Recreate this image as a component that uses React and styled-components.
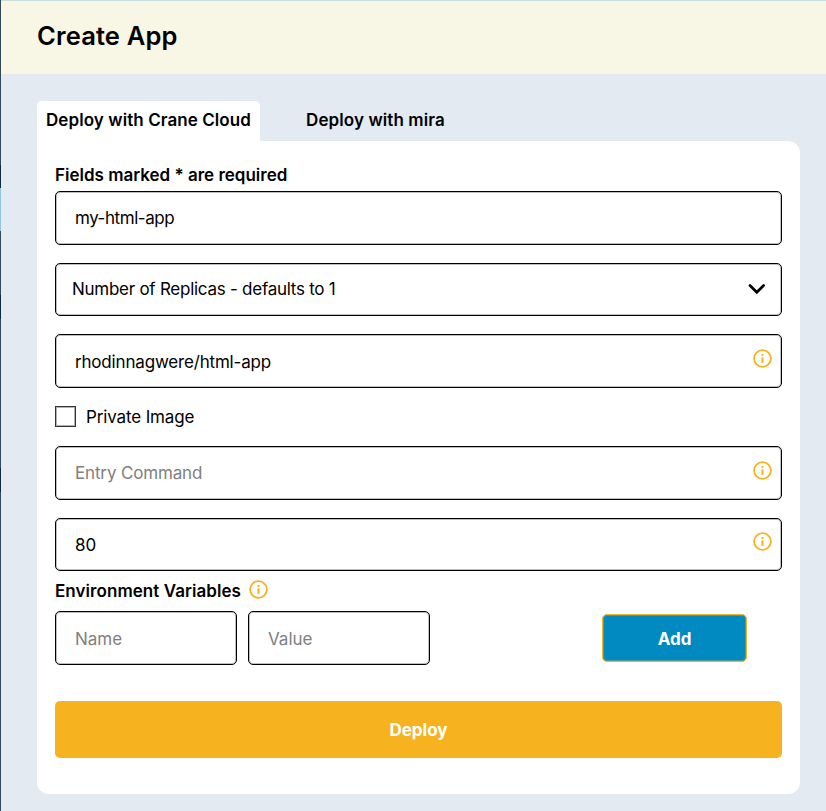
import React from "react";
import styled, { createGlobalStyle } from "styled-components";

const GlobalStyle = createGlobalStyle`
  *, *::before, *::after { box-sizing: border-box; }
  body { margin: 0; background: #e4eaf2; }
  input, button { font: inherit; color: inherit; }
`;

const Page = styled.div`
  display: flex;
  height: 811px;
  font-family: Inter, "Open Sans", sans-serif;
  font-size: 17px;
  line-height: 20px;
  color: #000;
`;

const SidebarEdge = styled.div`
  flex: 0 0 1px;
  background: linear-gradient(
    #34495c 165px, #0d2b40 165px 188px, #8fc6de 188px 231px,
    #34495c 231px 295px, #0d2b40 295px 319px, #34495c 319px 468px,
    #0d2b40 468px 492px, #34495c 492px
  );
`;

const Main = styled.main`
  flex: 1;
  display: flex;
  flex-direction: column;
  background: #e4eaf2;
`;

const Header = styled.header`
  height: 73.5px;
  padding: 20px 0 0 36px;
  border-top: 1px solid #c8dfe0;
  background: #f8f6e4;
`;

const Title = styled.h1`
  margin: 0;
  font-size: 25.5px;
  font-weight: 600;
  line-height: 30px;
  letter-spacing: 0.16px;
`;

const Content = styled.div`
  padding: 27px 26px 0 36px;
`;

const Tabs = styled.nav`
  display: flex;
  gap: 37px;
`;

const Tab = styled.button`
  height: 40px;
  padding: 0 9px 2px;
  border: 0;
  border-radius: 5px 5px 0 0;
  background: ${(p) => (p.$active ? "#fff" : "transparent")};
  font-weight: 600;
  letter-spacing: ${(p) => p.$tracking}px;
  white-space: nowrap;
  width: ${(p) => (p.$active ? "223px" : "auto")};
`;

const Card = styled.form`
  display: flex;
  flex-direction: column;
  height: 653.5px;
  padding: 24px 18px 0;
  border-radius: 0 12px 12px 12px;
  background: #fff;
`;

const Label = styled.div`
  display: flex;
  gap: 8px;
  height: 20px;
  margin-top: ${(p) => p.$top ?? 0}px;
  margin-bottom: ${(p) => p.$gap}px;
  font-weight: 600;
  letter-spacing: ${(p) => p.$tracking ?? 0}px;
`;

const Field = styled.div`
  display: flex;
  align-items: center;
  flex: 0 0 auto;
  width: ${(p) => p.$width ?? "100%"};
  height: ${(p) => p.$height ?? 54}px;
  padding: 0 ${(p) => p.$right ?? 9}px 0 ${(p) => p.$left ?? 19}px;
  border: 1px solid #000;
  border-radius: 5px;
  box-shadow: inset 0 0 0 1px rgba(0, 0, 0, 0.25);
`;

const Input = styled.input`
  flex: 1;
  min-width: 0;
  height: 26px;
  padding: ${(p) => (p.$low ? "2px 0 0" : "0")};
  border: 0;
  outline: 0;
  background: transparent;
  letter-spacing: ${(p) => p.$tracking ?? 0}px;
  &::placeholder { color: #808080; opacity: 1; }
`;

const SelectText = styled.span`
  flex: 1;
  letter-spacing: -0.26px;
`;

const Stack = styled.div`
  display: flex;
  flex-direction: column;
  gap: 18px;
`;

const CheckRow = styled.label`
  display: flex;
  align-items: center;
  gap: 10px;
  height: 22px;
  letter-spacing: -0.14px;
`;

const Checkbox = styled.span`
  width: 21px;
  height: 21px;
  border: 1.6px solid #333;
  box-shadow: inset 0 0 0 1px rgba(0, 0, 0, 0.3);
`;

const EnvRow = styled.div`
  display: flex;
  align-items: center;
  gap: 11px;
  height: 54px;
  padding-right: 35px;
`;

const AddButton = styled.button`
  width: 145px;
  height: 48px;
  margin-left: auto;
  padding: 2px 0 0;
  border: 1px solid #f6b221;
  border-radius: 5px;
  background: #008ac1;
  box-shadow: inset 0 0 0 1px rgba(246, 178, 33, 0.35);
  color: #fff;
  font-weight: 700;
`;

const DeployButton = styled.button`
  width: 100%;
  height: 57px;
  margin-top: 36px;
  padding: 2px 0 0;
  border: 0;
  border-radius: 5px;
  background: #f7b220;
  color: #fff;
  font-weight: 700;
`;

const Icon = styled.svg`
  display: block;
  flex: none;
  margin-top: ${(p) => p.$shift ?? 0}px;
`;

const InfoIcon = ({ shift }) => (
  <Icon $shift={shift} width="19" height="19" viewBox="0 0 19 19" fill="none">
    <circle cx="9.5" cy="9.5" r="8.4" stroke="#f7b220" strokeWidth="1.8" />
    <rect x="8.5" y="5" width="2" height="1.9" fill="#f7b220" />
    <rect x="8.5" y="8.3" width="2" height="5.6" fill="#f7b220" />
  </Icon>
);

const Chevron = () => (
  <Icon width="18" height="12" viewBox="0 0 18 12" fill="none">
    <path d="M2 2.5 8.8 9.3 15.6 2.5" stroke="#000" strokeWidth="2.7" strokeLinecap="round" />
  </Icon>
);

export default function App() {
  return (
    <>
      <GlobalStyle />
      <Page>
        <SidebarEdge />
        <Main>
          <Header>
            <Title>Create App</Title>
          </Header>
          <Content>
            <Tabs>
              <Tab $active $tracking={0.08}>Deploy with Crane Cloud</Tab>
              <Tab $tracking={0.1}>Deploy with mira</Tab>
            </Tabs>
            <Card>
              <Label $gap={6}>Fields marked * are required</Label>
              <Stack>
                <Field>
                  <Input $tracking={-0.45} defaultValue="my-html-app" />
                </Field>
                <Field $height={53} $left={16} $right={15}>
                  <SelectText>Number of Replicas - defaults to 1</SelectText>
                  <Chevron />
                </Field>
                <Field>
                  <Input $low $tracking={-0.18} defaultValue="rhodinnagwere/html-app" />
                  <InfoIcon shift={-5} />
                </Field>
                <CheckRow>
                  <Checkbox />
                  Private Image
                </CheckRow>
                <Field>
                  <Input $tracking={-0.15} placeholder="Entry Command" />
                  <InfoIcon shift={-5} />
                </Field>
                <Field $height={53}>
                  <Input $low defaultValue="80" />
                  <InfoIcon shift={-5} />
                </Field>
              </Stack>
              <Label $top={10} $gap={10} $tracking={0.06}>
                Environment Variables
                <InfoIcon shift={-1} />
              </Label>
              <EnvRow>
                <Field $width="182px"><Input $low placeholder="Name" /></Field>
                <Field $width="182px"><Input $low placeholder="Value" /></Field>
                <AddButton type="button">Add</AddButton>
              </EnvRow>
              <DeployButton type="button">Deploy</DeployButton>
            </Card>
          </Content>
        </Main>
      </Page>
    </>
  );
}
